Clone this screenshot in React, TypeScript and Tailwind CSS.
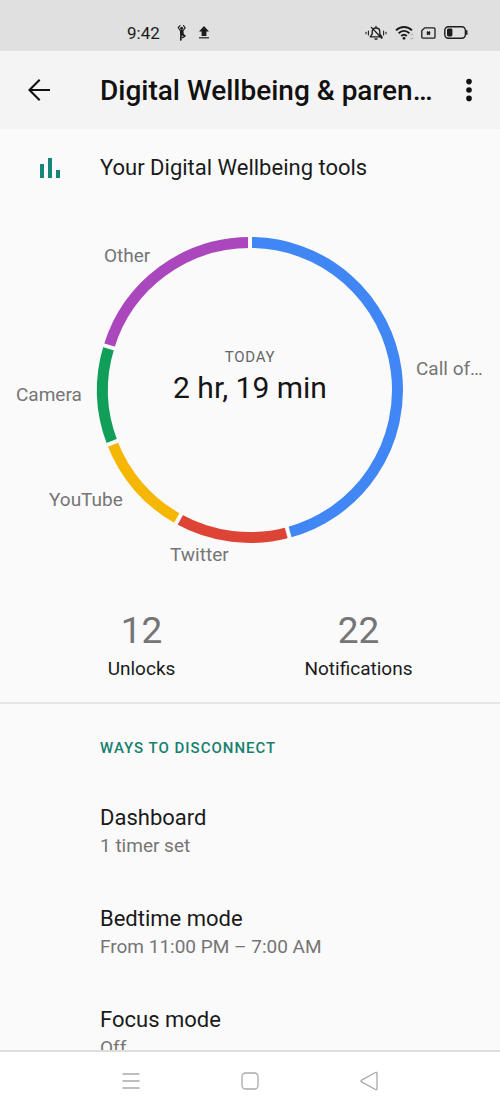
const slices = [
  { name: "Call of…", color: "#4186f5", from: 0, to: 165, x: 416, y: 169 },
  { name: "Twitter", color: "#de4436", from: 165, to: 209, x: 170, y: 355 },
  { name: "YouTube", color: "#f6b704", from: 209, to: 249, x: 49, y: 300 },
  { name: "Camera", color: "#119e59", from: 249, to: 287, x: 16, y: 195 },
  { name: "Other", color: "#aa47bc", from: 287, to: 360, x: 104, y: 56 },
];

const stats = [
  { value: 12, label: "Unlocks" },
  { value: 22, label: "Notifications" },
];

const settings = [
  { title: "Dashboard", summary: "1 timer set" },
  { title: "Bedtime mode", summary: "From 11:00 PM – 7:00 AM" },
  { title: "Focus mode", summary: "Off" },
];

const CX = 250;
const CY = 184;

const point = (angle: number, r: number) => {
  const rad = (angle * Math.PI) / 180;
  return `${CX + r * Math.sin(rad)} ${CY - r * Math.cos(rad)}`;
};

const StatusBar = () => {
  return (
    <div className="h-[51px] shrink-0 bg-[#e0e0e0] pl-[127px] pr-8 pt-3.5 flex items-center justify-between text-[#1c1c1c]">
      <div className="flex items-center">
        <span className="text-[17px] leading-6">9:42</span>
        <svg width="12" height="18" viewBox="0 0 12 18" className="ml-4" fill="none" stroke="currentColor" strokeLinecap="round" strokeLinejoin="round">
          <circle cx="5.6" cy="4.2" r="1.5" fill="currentColor" stroke="none" />
          <path d="M4 1.6L2.2 3.4L4 6.2M7.4 1.6L9.2 3.6L7.4 6.2" strokeWidth="1.1" />
          <path d="M5.7 7.2L5.9 9.8" strokeWidth="3.6" />
          <path d="M5 10.5L4.8 16M6.8 10.5L8.8 12L6.8 13.4" strokeWidth="1.7" />
        </svg>
        <svg width="12" height="13" viewBox="0 0 12 13" className="ml-2.5" fill="currentColor">
          <path d="M6 0L11 5.4H8.4V10H3.6V5.4H1Z" />
          <path d="M1 11.2H11V12.4H1Z" />
        </svg>
      </div>
      <div className="flex items-center">
        <svg width="22" height="16" viewBox="0 0 22 16" fill="none" stroke="currentColor" strokeWidth="1.3" strokeLinecap="round">
          <path d="M5.2 11.8H16.8L14.8 9V6.6C14.8 4.4 13.4 3 11 3C8.8 3 7.2 4.4 7.2 6.6V9L5.2 11.8M11 1.4V3M10 14H12M6.4 2.4L16.8 13.2" />
          <path d="M3.4 6V10M1 7.2V8.8M18.6 6V10M21 7.2V8.8" strokeWidth="1.1" />
        </svg>
        <svg width="20" height="16" viewBox="0 0 20 16" className="ml-2" fill="none" stroke="currentColor" strokeWidth="1.9">
          <path d="M1 5.4C5.6 .9 12.4 .9 17 5.4M3.6 8.3C6.8 5.2 11.2 5.2 14.4 8.3M6.2 11C7.9 9.4 10.1 9.4 11.8 11" />
          <circle cx="9" cy="13.3" r="1.4" fill="currentColor" stroke="none" />
          <path d="M15.2 10.3L16.8 8.7L18.4 10.3M15.2 12.7L16.8 14.3L18.4 12.7" stroke="#a8a8a8" strokeWidth="1" />
        </svg>
        <svg width="15" height="12" viewBox="0 0 15 12" className="ml-1.5" fill="none" stroke="currentColor" strokeWidth="1.3">
          <path d="M3.8 .8H12.8Q14 .8 14 2V10Q14 11.2 12.8 11.2H2Q.8 11.2 .8 10V3.6Z" />
          <path d="M6 4.6L9 7.6M9 4.6L6 7.6" strokeWidth="1.6" />
        </svg>
        <svg width="24" height="13" viewBox="0 0 24 13" className="ml-2" fill="none" stroke="currentColor" strokeWidth="1.4">
          <rect x=".8" y=".8" width="20.6" height="11.4" rx="3.6" />
          <rect x="3" y="2.6" width="5.4" height="7.8" rx="1.4" fill="currentColor" stroke="none" />
          <path d="M22.8 4.8V8.2" strokeLinecap="round" />
        </svg>
      </div>
    </div>
  );
};

const AppBar = () => {
  return (
    <header className="h-[78px] shrink-0 bg-[#f4f4f4] pl-[27px] pr-[19px] flex items-center text-[#111]">
      <button aria-label="Back" className="w-[73px]">
        <svg width="24" height="24" viewBox="0 0 24 24" fill="none" stroke="currentColor" strokeWidth="2.1">
          <path d="M12.7 1.8L2.5 12L12.7 22.2M2.5 12H23" />
        </svg>
      </button>
      <h1 className="flex-1 truncate pt-0.5 text-[28px] leading-9 font-medium">
        Digital Wellbeing &amp; parental controls
      </h1>
      <button aria-label="More options" className="ml-5">
        <svg width="24" height="24" viewBox="0 0 24 24" fill="currentColor">
          <circle cx="12" cy="3.6" r="2.8" />
          <circle cx="12" cy="12" r="2.8" />
          <circle cx="12" cy="20.4" r="2.8" />
        </svg>
      </button>
    </header>
  );
};

const UsageChart = () => {
  return (
    <svg viewBox="0 0 500 380" className="w-full" role="img" aria-label="Screen time today">
      {slices.map((s) => (
        <path
          key={s.name}
          d={`M${point(s.from, 147.5)}A147.5 147.5 0 0 1 ${point(s.to, 147.5)}`}
          fill="none"
          stroke={s.color}
          strokeWidth="11"
        />
      ))}
      {slices.map((s) => (
        <path
          key={s.name}
          d={`M${point(s.from, 138)}L${point(s.from, 157)}`}
          stroke="#fafafa"
          strokeWidth="4"
        />
      ))}
      {slices.map((s) => (
        <text key={s.name} x={s.x} y={s.y} fontSize="19" className="fill-[#757575]">
          {s.name}
        </text>
      ))}
      <text x={CX} y="156" fontSize="15" textAnchor="middle" className="fill-[#666] tracking-wider">
        TODAY
      </text>
      <text x={CX} y="192" fontSize="30" textAnchor="middle" className="fill-[#151515]">
        2 hr, 19 min
      </text>
    </svg>
  );
};

const NavBar = () => {
  return (
    <nav className="h-[61px] shrink-0 bg-white border-t-2 border-[#dedede] px-[72px] pb-0.5 grid grid-cols-3 text-[#a9a9a9]">
      <button aria-label="Recent apps" className="flex items-center justify-center">
        <svg width="18" height="18" viewBox="0 0 18 18" fill="none" stroke="currentColor" strokeWidth="1.3">
          <path d="M.5 2H17.5M.5 9H17.5M.5 16H17.5" />
        </svg>
      </button>
      <button aria-label="Home" className="flex items-center justify-center">
        <svg width="18" height="18" viewBox="0 0 18 18" fill="none" stroke="currentColor" strokeWidth="1.3">
          <rect x="1" y="1" width="16" height="16" rx="3.5" />
        </svg>
      </button>
      <button aria-label="Back" className="flex items-center justify-center">
        <svg width="18" height="20" viewBox="0 0 18 20" fill="none" stroke="currentColor" strokeWidth="1.3">
          <path d="M1.6 9.1L15.4 1.5Q17 .8 17 2.4V17.6Q17 19.2 15.4 18.5L1.6 10.9Q.2 10 1.6 9.1Z" />
        </svg>
      </button>
    </nav>
  );
};

const App = () => {
  return (
    <div className="h-screen flex flex-col bg-[#fafafa] font-[Roboto,sans-serif] text-[#1a1a1a]">
      <StatusBar />
      <AppBar />
      <main className="flex-1 min-h-0 overflow-y-auto [scrollbar-width:none]">
        <section className="border-b-2 border-[#e6e6e6] pb-[19px]">
          <div className="h-[77px] pl-10 flex items-center">
            <svg width="20" height="20" viewBox="0 0 20 20" className="mr-10 fill-[#16857a]">
              <path d="M0 6H4V20H0ZM8 0H12V20H8ZM16 12H20V20H16Z" />
            </svg>
            <h2 className="text-[22px] leading-7">Your Digital Wellbeing tools</h2>
          </div>
          <UsageChart />
          <div className="px-[33px] pt-[25px] grid grid-cols-2 text-center">
            {stats.map((s) => (
              <div key={s.label}>
                <div className="text-[37px] leading-10 text-[#757575]">{s.value}</div>
                <div className="mt-1 text-[19px] leading-7">{s.label}</div>
              </div>
            ))}
          </div>
        </section>
        <section className="pl-[100px] pr-6 pt-8">
          <h2 className="text-[15px] leading-6 font-medium tracking-[1px] text-[#16806e]">
            WAYS TO DISCONNECT
          </h2>
          <ul className="pt-[42px] flex flex-col gap-[45px]">
            {settings.map((s) => (
              <li key={s.title}>
                <a href="#" className="block">
                  <div className="text-[22px] leading-8">{s.title}</div>
                  <div className="text-[19px] leading-6 text-[#757575]">{s.summary}</div>
                </a>
              </li>
            ))}
          </ul>
        </section>
      </main>
      <NavBar />
    </div>
  );
};

export default App;
